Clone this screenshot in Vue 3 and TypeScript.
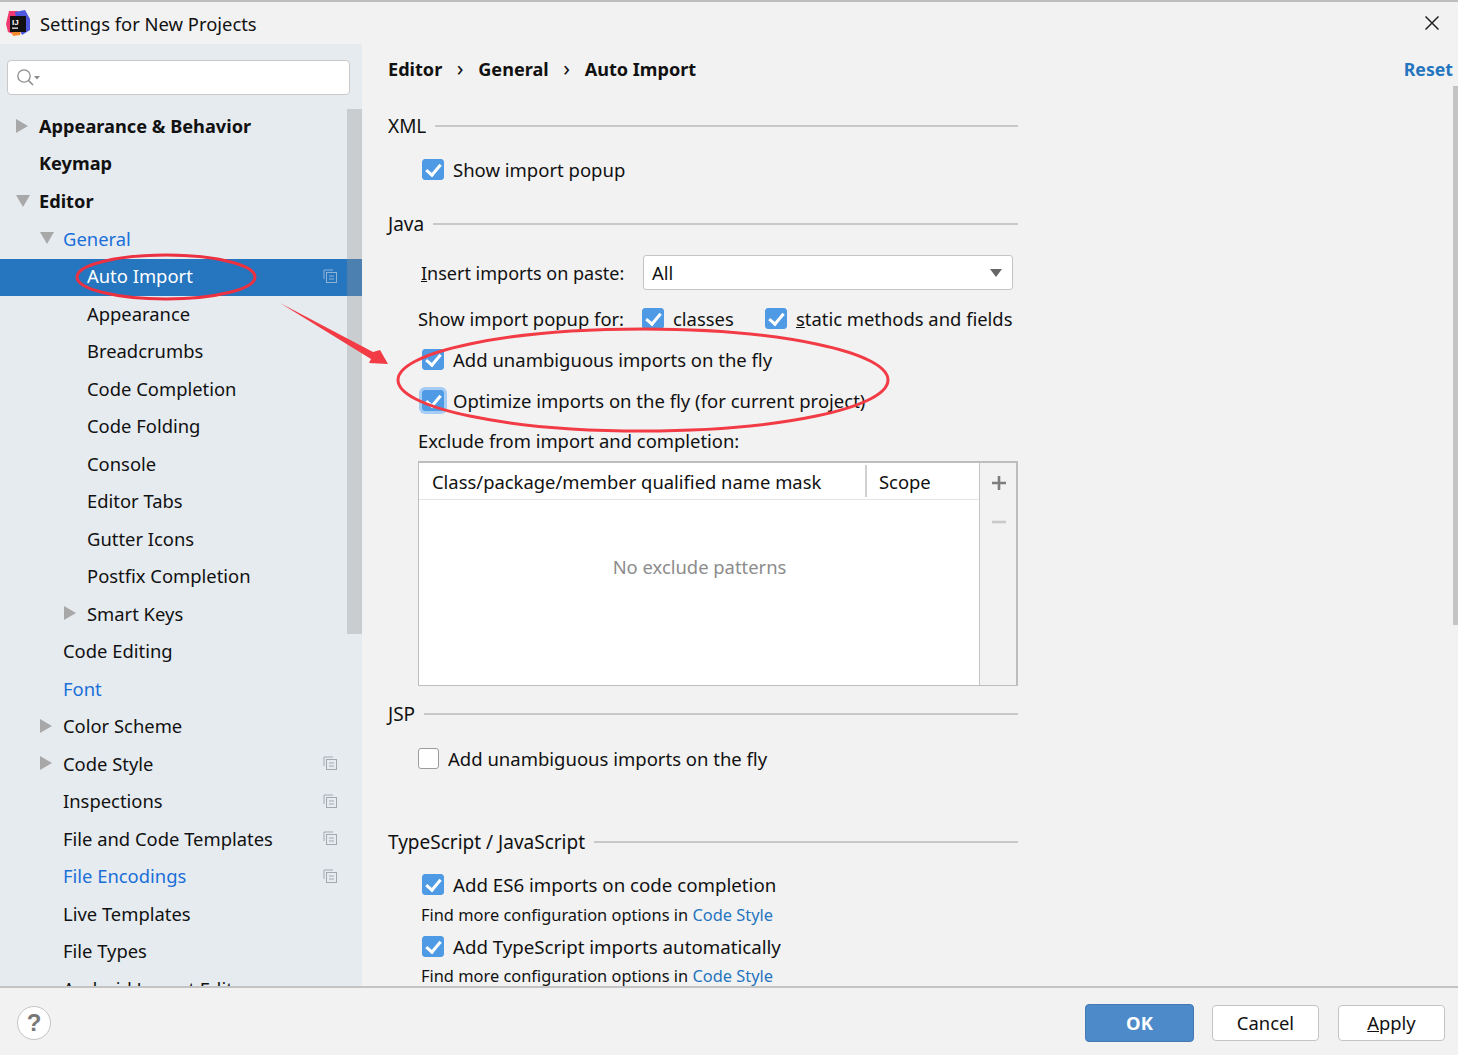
<script setup lang="ts">
// one row of the settings tree on the left
interface TreeRow {
  label: string
  level: 0 | 1 | 2
  arrow?: 'right' | 'down'
  link?: boolean
  copy?: boolean
  selected?: boolean
}

const rows: TreeRow[] = [
  { label: 'Appearance & Behavior', level: 0, arrow: 'right' },
  { label: 'Keymap', level: 0 },
  { label: 'Editor', level: 0, arrow: 'down' },
  { label: 'General', level: 1, arrow: 'down', link: true },
  { label: 'Auto Import', level: 2, copy: true, selected: true },
  { label: 'Appearance', level: 2 },
  { label: 'Breadcrumbs', level: 2 },
  { label: 'Code Completion', level: 2 },
  { label: 'Code Folding', level: 2 },
  { label: 'Console', level: 2 },
  { label: 'Editor Tabs', level: 2 },
  { label: 'Gutter Icons', level: 2 },
  { label: 'Postfix Completion', level: 2 },
  { label: 'Smart Keys', level: 2, arrow: 'right' },
  { label: 'Code Editing', level: 1 },
  { label: 'Font', level: 1, link: true },
  { label: 'Color Scheme', level: 1, arrow: 'right' },
  { label: 'Code Style', level: 1, arrow: 'right', copy: true },
  { label: 'Inspections', level: 1, copy: true },
  { label: 'File and Code Templates', level: 1, copy: true },
  { label: 'File Encodings', level: 1, link: true, copy: true },
  { label: 'Live Templates', level: 1 },
  { label: 'File Types', level: 1 },
  { label: 'Android Layout Editor', level: 1 },
]
</script>

<template>
  <div class="dialog">
    <header class="titlebar">
      <svg class="logo" width="26" height="26" viewBox="0 0 26 26">
        <polygon points="4,1 13,1 12,14 8,24 3,22 1,14" fill="#ee3a6f" />
        <polygon points="10,2 20,0 25,9 25,20 17,25 12,14" fill="#4d57e0" />
        <polygon points="6,20 16,20 15,25 8,26" fill="#f58a2c" />
        <rect x="5" y="6" width="16" height="16" fill="#111" />
        <text x="7" y="14.7" class="logo-text">IJ</text>
        <rect x="7" y="17.5" width="6" height="1.3" fill="#eee" />
      </svg>
      <span class="title">Settings for New Projects</span>
      <svg class="close" width="14" height="14" viewBox="0 0 14 14">
        <path d="M0.5 0.5 L13.5 13.5 M13.5 0.5 L0.5 13.5" stroke="#222" stroke-width="1.5" fill="none" />
      </svg>
    </header>

    <div class="body">
      <aside class="sidebar">
        <div class="search">
          <svg width="26" height="20" viewBox="0 0 26 20">
            <circle cx="8" cy="8" r="6.2" stroke="#8b8b8b" stroke-width="1.3" fill="none" />
            <path d="M12.5 12.5 L17 17" stroke="#8b8b8b" stroke-width="1.6" />
            <polygon points="18,8 24,8 21,11.5" fill="#8b8b8b" />
          </svg>
        </div>
        <ul class="tree">
          <li
            v-for="row in rows"
            :key="row.label"
            class="row"
            :class="[`level-${row.level}`, { selected: row.selected, link: row.link }]"
          >
            <span class="slot">
              <svg v-if="row.arrow === 'right'" width="12" height="14" viewBox="0 0 12 14">
                <polygon points="0,0 12,7 0,14" fill="#a8a8a8" />
              </svg>
              <svg v-else-if="row.arrow === 'down'" width="14" height="12" viewBox="0 0 14 12">
                <polygon points="0,0 14,0 7,12" fill="#a8a8a8" />
              </svg>
            </span>
            <span>{{ row.label }}</span>
            <svg v-if="row.copy" class="copy" width="14" height="14" viewBox="0 0 14 14">
              <path d="M1 10 V1 H10" fill="none" stroke="currentColor" />
              <rect x="3.5" y="3.5" width="10" height="10" fill="none" stroke="currentColor" />
              <path d="M6 7 H11 M6 10 H11" stroke="currentColor" />
            </svg>
          </li>
        </ul>
        <div class="side-scroll"></div>
      </aside>

      <main class="main">
        <nav class="crumbs">
          <b>Editor</b><span class="sep">›</span><b>General</b><span class="sep">›</span><b>Auto Import</b>
          <a class="reset">Reset</a>
        </nav>

        <div class="heading xml"><span>XML</span><i></i></div>
        <label class="check-row first"><span class="box on"></span>Show import popup</label>

        <div class="heading java"><span>Java</span><i></i></div>
        <div class="paste">
          <span class="paste-label"><u>I</u>nsert imports on paste:</span>
          <div class="select">All<span class="caret"></span></div>
        </div>
        <div class="popup-for">
          <span class="popup-label">Show import popup for:</span>
          <span class="box on"></span><span class="classes">classes</span>
          <span class="box on"></span><span><u>s</u>tatic methods and fields</span>
        </div>
        <label class="check-row tight"><span class="box on"></span>Add unambiguous imports on the fly</label>
        <label class="check-row tight"><span class="box on focus"></span>Optimize imports on the fly (for current project)</label>
        <div class="exclude">Exclude from import and completion:</div>

        <div class="table">
          <div class="grid">
            <div class="thead">
              <span class="col-name">Class/package/member qualified name mask</span>
              <span class="col-scope">Scope</span>
            </div>
            <div class="empty">No exclude patterns</div>
          </div>
          <div class="tools">
            <svg width="16" height="16" viewBox="0 0 16 16">
              <path d="M8 1 V15 M1 8 H15" stroke="#7d7d7d" stroke-width="2.6" />
            </svg>
            <svg width="16" height="16" viewBox="0 0 16 16">
              <path d="M1 8 H15" stroke="#c9c9c9" stroke-width="2.6" />
            </svg>
          </div>
        </div>

        <div class="heading jsp"><span>JSP</span><i></i></div>
        <label class="check-row jsp-row"><span class="box"></span>Add unambiguous imports on the fly</label>

        <div class="heading ts"><span>TypeScript / JavaScript</span><i></i></div>
        <label class="check-row es6"><span class="box on"></span>Add ES6 imports on code completion</label>
        <div class="more">Find more configuration options in <a>Code Style</a></div>
        <label class="check-row ts-row"><span class="box on"></span>Add TypeScript imports automatically</label>
        <div class="more last">Find more configuration options in <a>Code Style</a></div>

        <div class="main-scroll"></div>
      </main>
    </div>

    <footer class="footer">
      <span class="help">?</span>
      <button class="btn ok">OK</button>
      <button class="btn cancel">Cancel</button>
      <button class="btn apply"><u>A</u>pply</button>
    </footer>

    <!-- the red marks somebody drew over the screenshot -->
    <svg class="marks" width="1458" height="1055" viewBox="0 0 1458 1055">
      <ellipse cx="166" cy="277" rx="89" ry="22" fill="none" stroke="#ec3140" stroke-width="3" />
      <ellipse cx="643" cy="380" rx="245" ry="51" fill="none" stroke="#f23b44" stroke-width="3" />
      <polygon points="280,303 373,352 380,350 388,364 369,363 371,359" fill="#f23b44" />
    </svg>
  </div>
</template>

<style scoped>
.dialog {
  position: relative;
  width: 1458px;
  height: 1055px;
  overflow: hidden;
  display: flex;
  flex-direction: column;
  background: #f2f2f2;
  color: #111;
  font-family: "Noto Sans", sans-serif;
  font-size: 18.4px;
}

.titlebar {
  flex: none;
  height: 44px;
  border-top: 2px solid #bdbdbd;
  box-sizing: border-box;
  display: flex;
  align-items: center;
  padding: 0 19px 0 5px;
}
.logo { margin-right: 9px; }
.logo-text { font: bold 8px "Liberation Sans", sans-serif; fill: #fff; }
.title { flex: 1; }

.body {
  flex: 1;
  min-height: 0;
  display: flex;
}

.sidebar {
  position: relative;
  flex: none;
  width: 362px;
  background: #e6ebf0;
  overflow: hidden;
}
.search {
  box-sizing: border-box;
  height: 35px;
  margin: 16px 12px 13.5px 7px;
  padding: 7px 8px;
  background: #fff;
  border: 1.5px solid #c9c9c9;
  border-radius: 4px;
}
.tree {
  list-style: none;
  margin: 0;
  padding: 0;
}
.row {
  box-sizing: border-box;
  height: 37.5px;
  display: flex;
  align-items: center;
  padding-right: 25px;
  padding-bottom: 3px;
}
.level-0 { padding-left: 16px; font-weight: 700; font-size: 18.2px; }
.level-1 { padding-left: 40px; }
.level-2 { padding-left: 64px; }
.slot {
  flex: none;
  width: 23px;
  display: flex;
  align-items: center;
}
.link { color: #1a6fd8; }
.copy { margin-left: auto; color: #a3a8ad; }
.selected { background: #2675bf; color: #fff; }
.selected .copy { color: #8fb4d8; }
.side-scroll {
  position: absolute;
  left: 347px;
  top: 65px;
  width: 15px;
  height: 525px;
  background: rgba(150, 150, 150, 0.35);
}

.main {
  position: relative;
  flex: 1;
  min-width: 0;
  padding-left: 26px;
  overflow: hidden;
}
.crumbs {
  height: 50px;
  display: flex;
  align-items: center;
}
.crumbs b { font-weight: 700; font-size: 18.1px; }
.sep { width: 36px; padding-bottom: 4px; text-align: center; font-size: 22px; }
.reset {
  margin-left: auto;
  margin-right: 5px;
  font-weight: 700;
  font-size: 17.7px;
  color: #2675bf;
}

.heading {
  width: 630px;
  height: 28px;
  display: flex;
  align-items: center;
  gap: 9px;
  font-size: 19px;
}
.heading i {
  flex: 1;
  height: 1.5px;
  background: #c8c8c8;
}
.xml { margin-top: 18px; }
.java { margin-top: 24px; }
.jsp { margin-top: 14px; }
.ts { margin-top: 53px; }

.check-row {
  box-sizing: border-box;
  height: 32px;
  display: flex;
  align-items: center;
  padding-left: 34px;
  padding-bottom: 2px;
  font-size: 18.5px;
}
.first { margin-top: 14px; }
.tight { margin-top: 9px; }
.jsp-row { margin-top: 15px; padding-left: 30px; }
.jsp-row .box { width: 21px; margin-right: 9px; }
.es6 { margin-top: 13px; font-size: 18.7px; }
.ts-row { margin-top: 3px; font-size: 18.7px; }

.box {
  position: relative;
  flex: none;
  box-sizing: border-box;
  width: 22px;
  height: 21px;
  margin-right: 9px;
  border: 1px solid #9c9c9c;
  border-radius: 3px;
  background: #fff;
}
.box.on { background: #4f9ae4; border-color: #4f9ae4; }
.box.on::after {
  content: "";
  position: absolute;
  left: 6px;
  top: 1.5px;
  width: 6px;
  height: 12px;
  border-right: 3px solid #fff;
  border-bottom: 3px solid #fff;
  transform: rotate(40deg);
}
.box.focus { box-shadow: 0 0 0 3px #a5cdf3; }

.paste {
  margin-top: 17px;
  height: 35px;
  display: flex;
  align-items: center;
}
.paste-label { margin-left: 33px; width: 222px; font-size: 18px; }
.select {
  box-sizing: border-box;
  width: 370px;
  height: 35px;
  display: flex;
  align-items: center;
  justify-content: space-between;
  padding: 0 10px 0 8px;
  background: #fff;
  border: 1.5px solid #c4c4c4;
  border-radius: 3px;
}
.caret {
  width: 0;
  height: 0;
  border-left: 6.5px solid transparent;
  border-right: 6.5px solid transparent;
  border-top: 8px solid #666;
}
.popup-for {
  box-sizing: border-box;
  margin-top: 13px;
  height: 32px;
  display: flex;
  align-items: center;
  padding-left: 30px;
  padding-bottom: 2px;
}
.popup-label { width: 224px; }
.classes { width: 92px; }
.exclude {
  margin-top: 10px;
  height: 28px;
  line-height: 28px;
  padding-left: 30px;
}

.table {
  box-sizing: border-box;
  margin: 6px 0 0 30px;
  width: 600px;
  height: 225px;
  display: flex;
  background: #fff;
  border: 1px solid #bdbdbd;
  border-top-width: 2px;
  border-right-width: 2px;
}
.grid { flex: 1; min-width: 0; }
.thead {
  height: 36px;
  display: flex;
  align-items: center;
  border-bottom: 1px solid #e4e4e4;
}
.col-name {
  box-sizing: border-box;
  width: 448px;
  height: 32px;
  line-height: 34px;
  padding-left: 13px;
  border-right: 2px solid #d0d0d0;
  white-space: nowrap;
}
.col-scope { padding-left: 12px; }
.empty {
  margin-top: 54px;
  text-align: center;
  color: #8c8c8c;
  padding-left: 1px;
}
.tools {
  flex: none;
  width: 35px;
  background: #f2f2f2;
  border-left: 1px solid #c4c4c4;
  display: flex;
  flex-direction: column;
  align-items: center;
  gap: 23px;
  padding: 12px 0 0 1px;
}

.more {
  margin-top: 1px;
  height: 26px;
  line-height: 26px;
  padding-left: 33px;
  font-size: 16.4px;
}
.more.last { margin-top: 0; }
.more a { color: #2675bf; }

.main-scroll {
  position: absolute;
  right: 0;
  top: 42px;
  width: 5px;
  height: 539px;
  background: #c4c4c4;
}

.footer {
  flex: none;
  box-sizing: border-box;
  height: 69px;
  border-top: 2px solid #c4c4c4;
  display: flex;
  align-items: center;
  padding: 2px 13px 0 17px;
}
.help {
  box-sizing: border-box;
  width: 34px;
  height: 34px;
  margin-right: auto;
  display: flex;
  align-items: center;
  justify-content: center;
  border-radius: 50%;
  background: #fff;
  border: 1.5px solid #c4c4c4;
  color: #777;
  font: bold 24px "Liberation Sans", sans-serif;
}
.btn {
  box-sizing: border-box;
  width: 107px;
  height: 36px;
  border: 1.5px solid #c4c4c4;
  border-radius: 4px;
  background: #fff;
  color: #111;
  font: inherit;
  padding: 0;
}
.ok {
  width: 109px;
  height: 38px;
  margin-right: 18px;
  background: #4d8ac9;
  border-color: #4479b4;
  color: #fff;
  font-weight: 700;
}
.cancel { margin-right: 19px; }

.marks {
  position: absolute;
  left: 0;
  top: 0;
  pointer-events: none;
}
</style>
